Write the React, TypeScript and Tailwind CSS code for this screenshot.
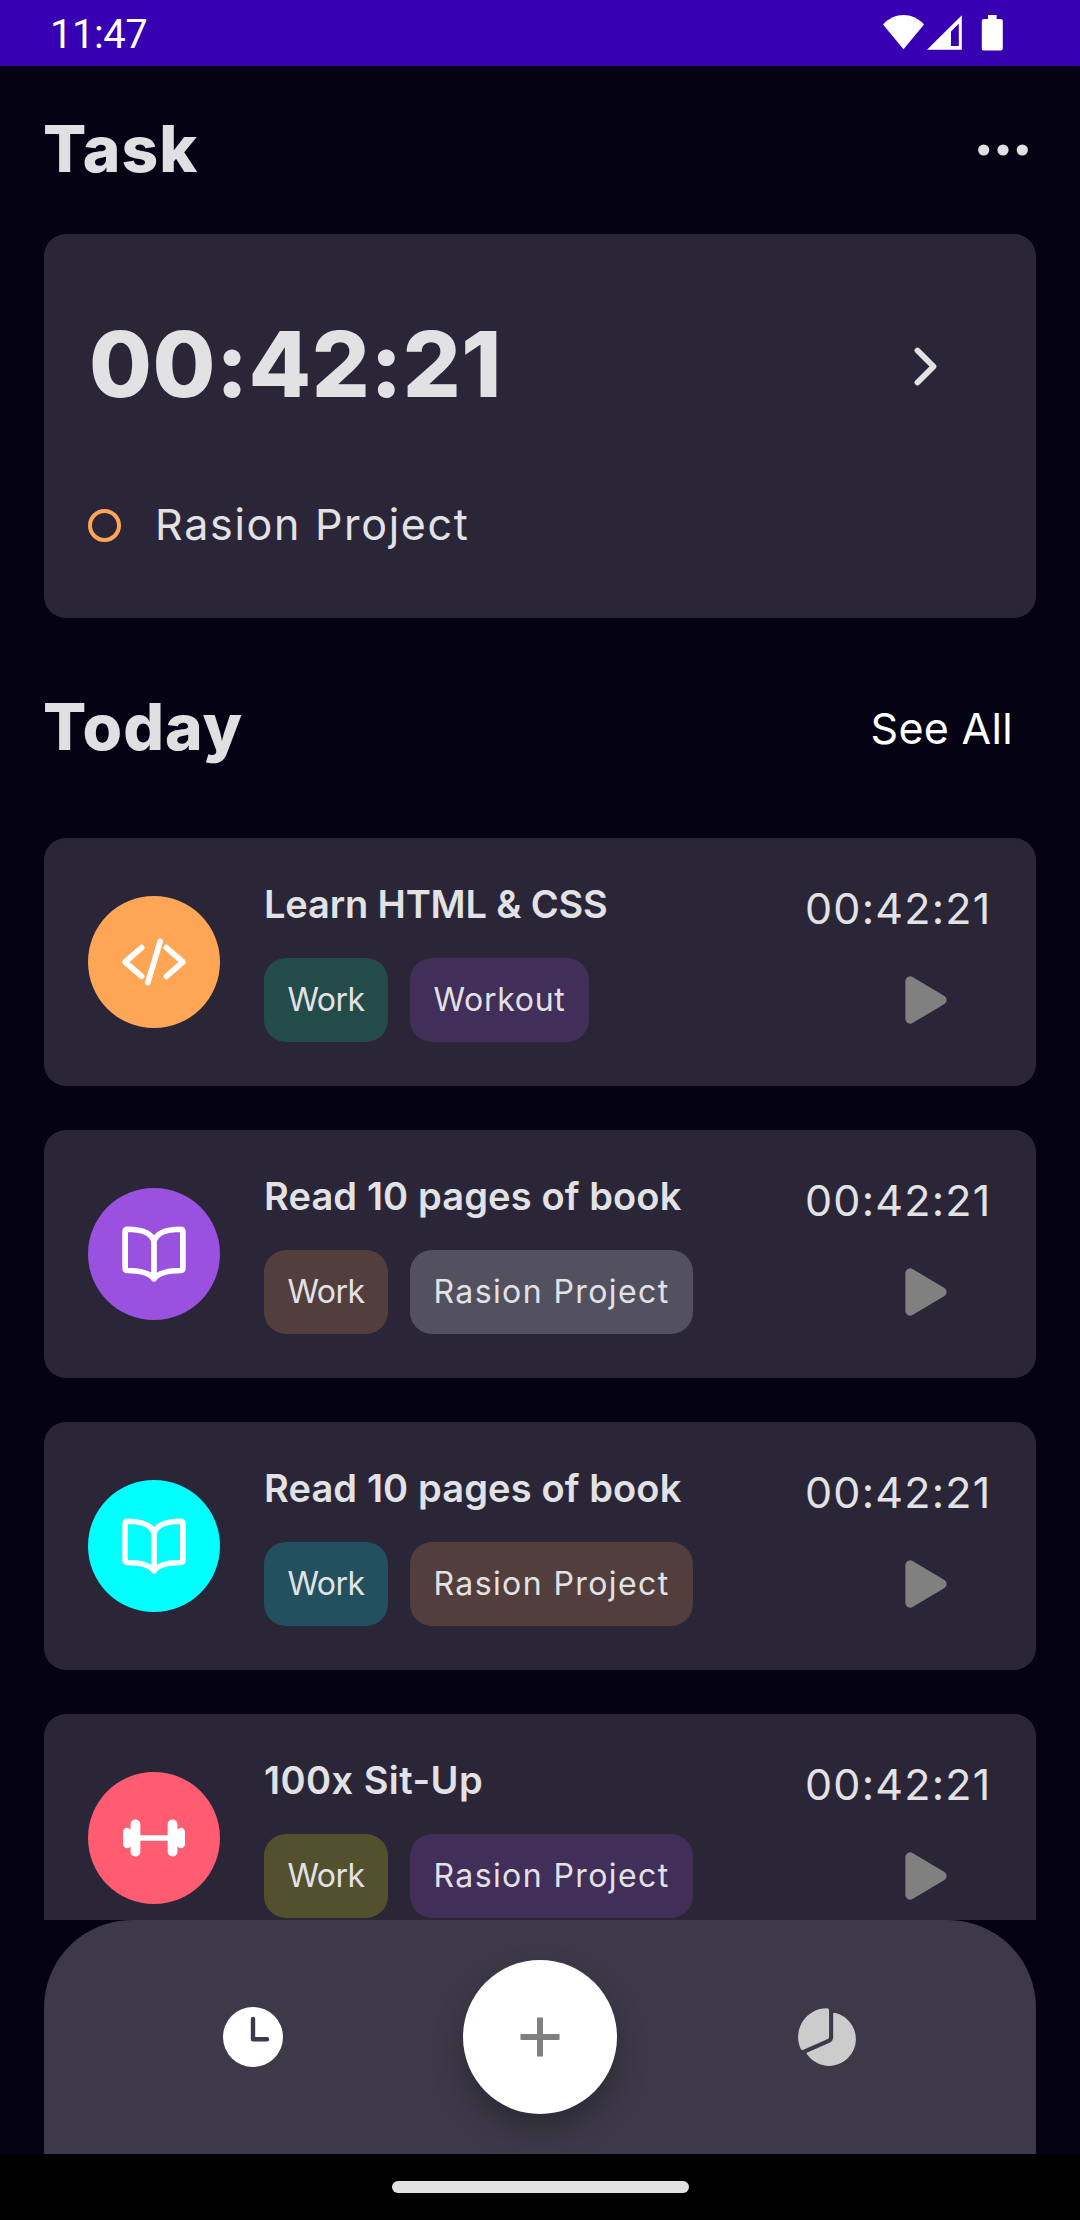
import type { ReactNode } from "react";
import { IoBarbell, IoPieChart, IoPlay } from "react-icons/io5";

const CodeIcon = () => (
  <svg viewBox="0 0 512 512" className="size-[66px]" fill="none" stroke="currentColor" strokeWidth="44" strokeLinecap="round" strokeLinejoin="round">
    <path d="M160 368L32 256l128-112M352 368l128-112-128-112M304 96l-96 320" />
  </svg>
);

const BookIcon = () => (
  <svg viewBox="0 0 512 512" className="size-[66px]" fill="none" stroke="currentColor" strokeWidth="44" strokeLinecap="round" strokeLinejoin="round">
    <path d="M256 160c16-63.16 76.43-95.41 208-96a15.94 15.94 0 0116 16v288a16 16 0 01-16 16c-128 0-177.45 25.81-208 64-30.37-38-80-64-208-64-9.88 0-16-8.05-16-17.93V80a15.94 15.94 0 0116-16c131.57.59 192 32.84 208 96zM256 160v288" />
  </svg>
);

type Tag = { label: string; className: string };
type Task = { title: string; titleClass: string; circle: string; icon: ReactNode; tags: Tag[] };

const tasks: Task[] = [
  {
    title: "Learn HTML & CSS",
    titleClass: "tracking-[-0.16px]",
    circle: "bg-[#ffa656]",
    icon: <CodeIcon />,
    tags: [
      { label: "Work", className: "w-[124px] tracking-[-0.5px] bg-[#234b4a]" },
      { label: "Workout", className: "w-[179px] tracking-[0.7px] bg-[#412e59]" },
    ],
  },
  {
    title: "Read 10 pages of book",
    titleClass: "tracking-[0.13px]",
    circle: "bg-[#9a51e0]",
    icon: <BookIcon />,
    tags: [
      { label: "Work", className: "w-[124px] tracking-[-0.5px] bg-[#523f3d]" },
      { label: "Rasion Project", className: "w-[283px] tracking-[1.4px] bg-[#535060]" },
    ],
  },
  {
    title: "Read 10 pages of book",
    titleClass: "tracking-[0.13px]",
    circle: "bg-[#00ffff]",
    icon: <BookIcon />,
    tags: [
      { label: "Work", className: "w-[124px] tracking-[-0.5px] bg-[#22505f]" },
      { label: "Rasion Project", className: "w-[283px] tracking-[1.4px] bg-[#523f3d]" },
    ],
  },
  {
    title: "100x Sit-Up",
    titleClass: "tracking-[0.45px]",
    circle: "bg-[#ff5c72]",
    icon: <IoBarbell className="size-[66px]" />,
    tags: [
      { label: "Work", className: "w-[124px] tracking-[-0.5px] bg-[#53502e]" },
      { label: "Rasion Project", className: "w-[283px] tracking-[1.4px] bg-[#412e59]" },
    ],
  },
];

function StatusBar() {
  return (
    <header className="flex h-[66px] shrink-0 items-start justify-between bg-[#3700b3] pl-[50px] pr-[77px] text-white">
      <span className="pt-[12px] font-[Roboto,sans-serif] text-[40px] leading-[46px] tracking-[-0.5px]">11:47</span>
      <svg viewBox="0 0 120 36" className="mt-[15px] h-[36px] w-[120px]" fill="currentColor">
        <path d="M0 9.4C12-3 29-3 41 9.4L20.5 34.3Z" />
        <path fillRule="evenodd" d="M44 34.8L78.8.2V34.8ZM68 16.4V31H75.8V8.8Z" />
        <path d="M105 0h8.6v4h4.2a2 2 0 0 1 2 2v27.6a2 2 0 0 1-2 2h-17a2 2 0 0 1-2-2V6a2 2 0 0 1 2-2h4.2Z" />
      </svg>
    </header>
  );
}

function TaskCard({ task }: { task: Task }) {
  return (
    <article className="flex h-[248px] shrink-0 rounded-[22px] bg-[#2a2638]">
      <div className={`ml-[44px] flex size-[132px] shrink-0 items-center justify-center self-center rounded-full text-white ${task.circle}`}>
        {task.icon}
      </div>
      <div className="ml-[44px] flex-1 pt-[44px]">
        <h3 className={`whitespace-nowrap text-[38px] font-semibold leading-[45px] ${task.titleClass}`}>{task.title}</h3>
        <div className="mt-[31px] flex gap-[22px]">
          {task.tags.map((tag) => (
            <span key={tag.label} className={`flex h-[84px] items-center justify-center whitespace-nowrap rounded-[22px] pb-px text-[32px] ${tag.className}`}>
              {tag.label}
            </span>
          ))}
        </div>
      </div>
      <div className="w-[231px] shrink-0 pt-[48px]">
        <p className="text-[43px] leading-[45px] tracking-[1.2px]">00:42:21</p>
        <IoPlay className="ml-[88px] mt-[36px] size-[66px] text-[#808080]" />
      </div>
    </article>
  );
}

export default function App() {
  return (
    <div className="flex h-[2220px] w-[1080px] flex-col overflow-hidden bg-[#050214] font-[Inter,sans-serif] text-[#e2e2e5]">
      <StatusBar />

      <div className="flex h-[168px] shrink-0 items-center justify-between pl-[43px] pr-[46px] text-[#e0e0e2]">
        <h1 className="pb-[3px] text-[64px] font-extrabold leading-none tracking-[1.1px]">Task</h1>
        <svg viewBox="0 0 62 62" className="size-[62px]" fill="currentColor">
          <circle cx="11.7" cy="31" r="5.6" />
          <circle cx="31" cy="31" r="5.6" />
          <circle cx="50.3" cy="31" r="5.6" />
        </svg>
      </div>

      <section className="mx-[44px] h-[384px] shrink-0 rounded-[22px] bg-[#2a2638]">
        <div className="flex h-[264px] items-center justify-between pl-[45px] pr-[82px]">
          <p className="pb-[3px] text-[91px] font-extrabold leading-none tracking-[0.5px]">00:42:21</p>
          <svg viewBox="0 0 512 512" className="size-[57px]" fill="none" stroke="currentColor" strokeWidth="52" strokeLinecap="round" strokeLinejoin="round">
            <path d="M184 112l144 144-144 144" />
          </svg>
        </div>
        <div className="flex h-[54px] items-center pl-[44px]">
          <span className="size-[33px] rounded-full border-4 border-[#ffa656]" />
          <span className="ml-[34px] pb-px text-[43px] leading-none tracking-[1.7px]">Rasion Project</span>
        </div>
      </section>

      <div className="flex h-[220px] shrink-0 items-center justify-between pl-[43px] pr-[67px]">
        <h2 className="pb-[2px] text-[64px] font-extrabold leading-none tracking-[1.1px] text-[#e0e0e2]">Today</h2>
        <span className="text-[43px] leading-none tracking-[0.3px] text-white">See All</span>
      </div>

      <main className="mx-[44px] flex h-[1082px] shrink-0 flex-col gap-[44px] overflow-hidden">
        {tasks.map((task, i) => (
          <TaskCard key={i} task={task} />
        ))}
      </main>

      <nav className="mx-[44px] grid h-[234px] shrink-0 grid-cols-3 place-items-center rounded-t-[88px] bg-[#3d3949] px-[66px]">
        <svg viewBox="0 0 60 60" className="size-[60px]">
          <circle cx="30" cy="30" r="30" fill="#fff" />
          <path d="M30 12V32.3H44" fill="none" stroke="#3d3949" strokeWidth="4.4" strokeLinecap="round" strokeLinejoin="round" />
        </svg>
        <button className="flex size-[154px] items-center justify-center rounded-full bg-white shadow-[0_16px_30px_rgba(0,0,0,0.26)]">
          <svg viewBox="0 0 40 40" className="size-[40px]" stroke="#808080" strokeWidth="6">
            <path d="M20 .5v39M.5 20h39" />
          </svg>
        </button>
        <IoPieChart className="size-[66px] text-[#cccccc]" />
      </nav>

      <footer className="flex h-[66px] shrink-0 items-center justify-center bg-black">
        <div className="h-[12px] w-[297px] rounded-full bg-[#e2e2e2]" />
      </footer>
    </div>
  );
}
